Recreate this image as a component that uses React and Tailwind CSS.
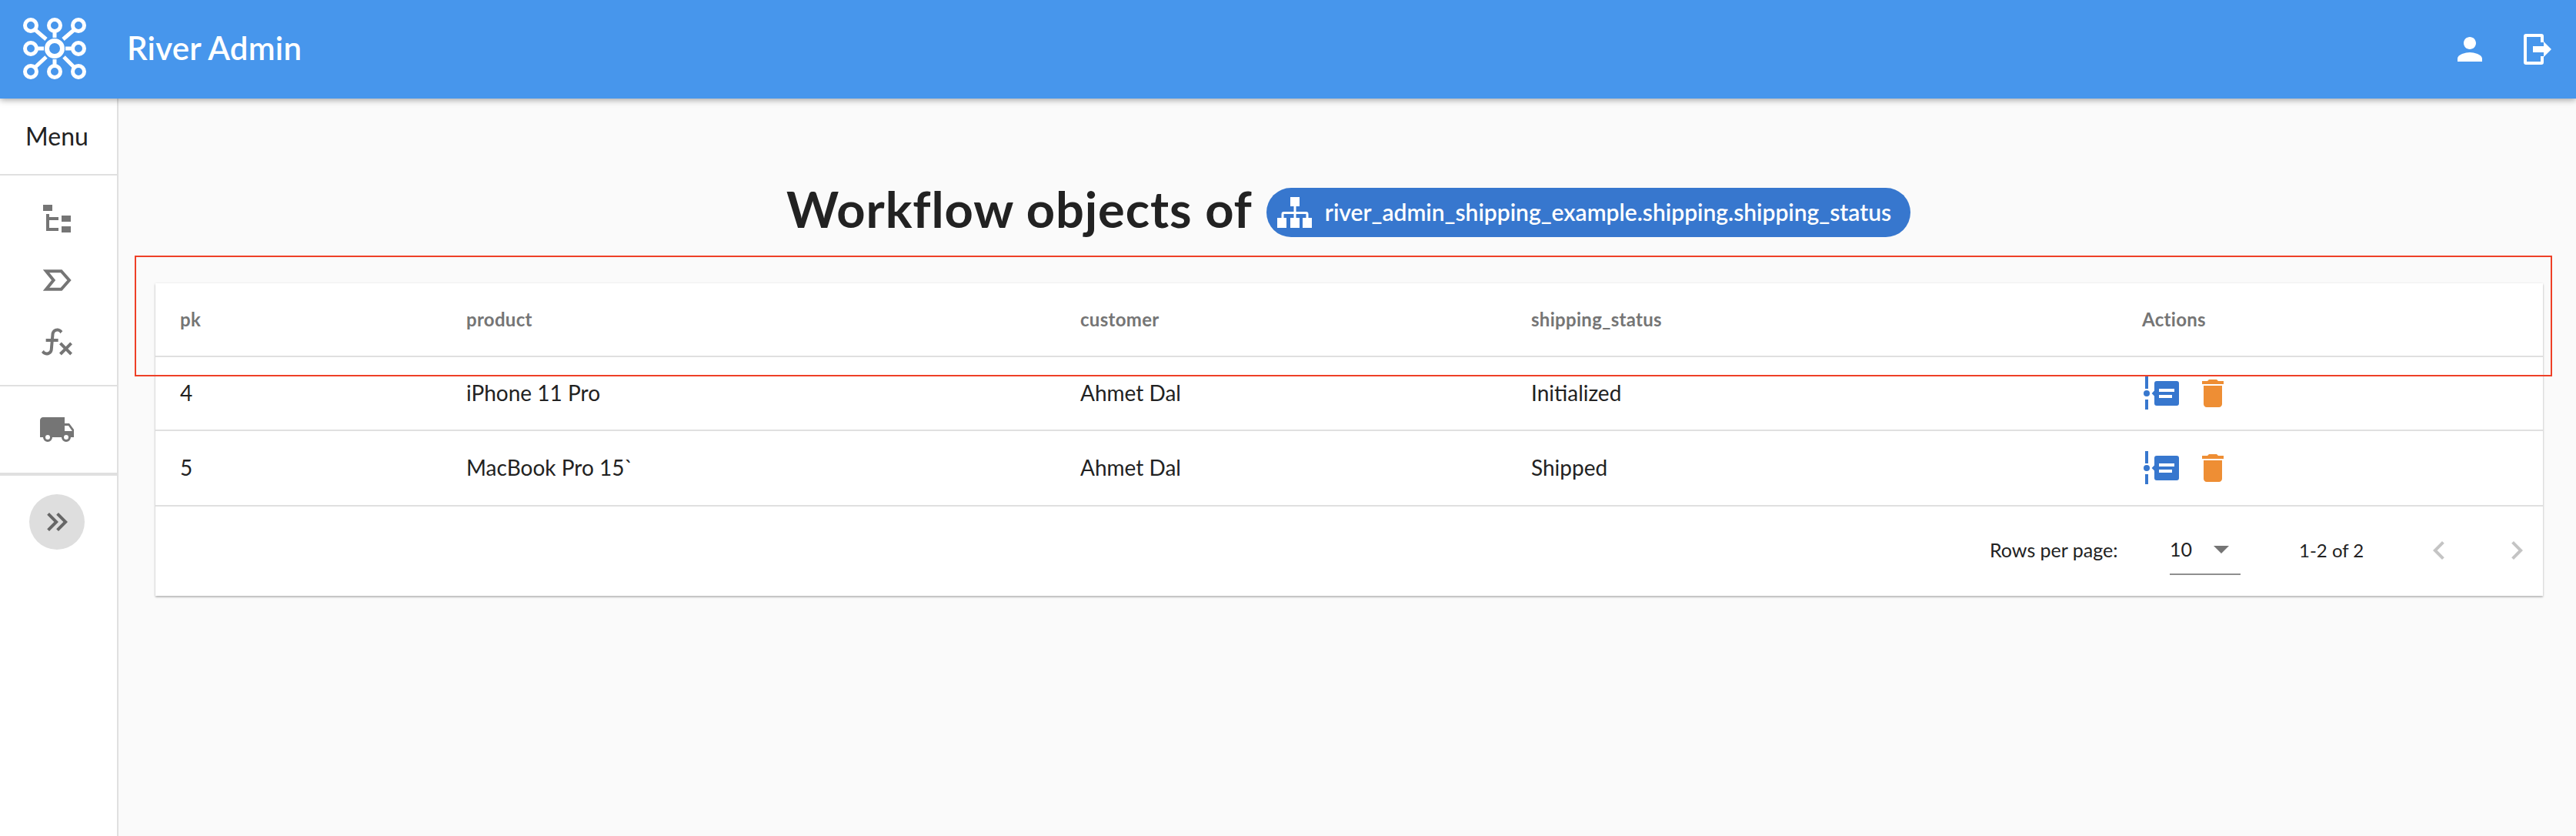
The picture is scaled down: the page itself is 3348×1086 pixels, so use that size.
import React from "react";

const font = { fontFamily: "Lato, 'Noto Sans', sans-serif" };

/* ── icons ── */

const Mdi = ({ d, className }) => (
  <svg viewBox="0 0 24 24" className={className} fill="currentColor">
    <path d={d} />
  </svg>
);

const TREE = "M3,3H9V7H3V3M15,10H21V14H15V10M15,17H21V21H15V17M13,13H7V18H13V20H7L5,20V9H7V11H13V13Z";
const FX =
  "M12.42,5.29C11.32,5.19 10.35,6 10.25,7.11L10,10H12.82V12H9.82L9.38,17.07C9.18,19.27 7.24,20.9 5.04,20.7C3.79,20.59 2.66,19.9 2,18.83L3.5,17.33C3.83,18.38 4.96,18.97 6,18.63C6.78,18.39 7.33,17.7 7.4,16.89L7.82,12H4.82V10H8L8.27,6.93C8.46,4.73 10.39,3.1 12.6,3.28C13.86,3.39 15,4.09 15.66,5.17L14.16,6.67C13.91,5.9 13.23,5.36 12.42,5.29M22,13.65L20.59,12.24L17.76,15.07L14.93,12.24L13.5,13.65L16.35,16.5L13.5,19.31L14.93,20.72L17.76,17.89L20.59,20.72L22,19.31L19.17,16.5L22,13.65Z";
const TRUCK =
  "M18,18.5A1.5,1.5 0 0,1 16.5,17A1.5,1.5 0 0,1 18,15.5A1.5,1.5 0 0,1 19.5,17A1.5,1.5 0 0,1 18,18.5M19.5,9.5L21.96,13H17V9.5M6,18.5A1.5,1.5 0 0,1 4.5,17A1.5,1.5 0 0,1 6,15.5A1.5,1.5 0 0,1 7.5,17A1.5,1.5 0 0,1 6,18.5M20,8H17V4H3C1.89,4 1,4.89 1,6V17H3A3,3 0 0,0 6,20A3,3 0 0,0 9,17H15A3,3 0 0,0 18,20A3,3 0 0,0 21,17H23V12L20,8Z";
const DOUBLE_CHEVRON =
  "M5.59,7.41L7,6L13,12L7,18L5.59,16.59L10.17,12L5.59,7.41M11.59,7.41L13,6L19,12L13,18L11.59,16.59L16.17,12L11.59,7.41Z";
const TRASH = "M6 19c0 1.1.9 2 2 2h8c1.1 0 2-.9 2-2V7H6v12zM19 4h-3.5l-1-1h-5l-1 1H5v2h14V4z";
const PERSON = "M12 12c2.21 0 4-1.79 4-4s-1.79-4-4-4-4 1.79-4 4 1.79 4 4 4zm0 2c-2.67 0-8 1.34-8 4v2h16v-2c0-2.66-5.33-4-8-4z";

const SequenceIcon = ({ className }) => (
  <svg viewBox="0 0 24 24" className={className} fill="none" stroke="currentColor" strokeWidth="2">
    <path d="M5 6.100H14.800L20 12L14.800 17.900H5L9.800 12Z" />
  </svg>
);

const LogoutIcon = ({ className }) => (
  <svg viewBox="0 0 36 40" className={className} fill="currentColor">
    <path d="M3 0h20a3 3 0 0 1 3 3v8h-4V4H4v32h18v-7h4v8a3 3 0 0 1-3 3H3a3 3 0 0 1-3-3V3a3 3 0 0 1 3-3z" />
    <path d="M12 16h14v-6l10 10-10 10v-6H12z" />
  </svg>
);

const TimelineIcon = ({ className }) => (
  <svg viewBox="0 0 24 24" className={className} fill="currentColor">
    <path d="M1 1h2v8H1zM1 16h2v6.500H1z" />
    <circle cx="2" cy="12" r="2" />
    <path d="M5.300 12L7 10.300V13.700Z" />
    <path
      fillRule="evenodd"
      d="M8.500 4H21.500a1.500 1.500 0 0 1 1.500 1.500V18.500a1.500 1.500 0 0 1-1.500 1.500H8.500a1.500 1.500 0 0 1-1.500-1.500V5.500A1.500 1.500 0 0 1 8.500 4ZM10 9V11H20V9ZM10 13V15H18.500V13Z"
    />
  </svg>
);

const SitemapIcon = ({ className }) => (
  <svg viewBox="0 0 45 40" className={className} fill="currentColor">
    <path d="M17 0h12v12H17zM0 27h12v13H0zM17 27h12v13H17zM33 27h12v13H33z" />
    <path d="M21.500 12h3v7h13a3 3 0 0 1 3 3v5h-3v-5h-13v5h-3v-5h-13v5h-3v-5a3 3 0 0 1 3-3h13z" />
  </svg>
);

const RiverLogo = ({ className }) => {
  const nodes = [
    [40, 33],
    [71, 33],
    [102, 33],
    [40, 63],
    [102, 63],
    [40, 93],
    [71, 93],
    [102, 93],
  ];
  return (
    <svg viewBox="0 0 142 128" className={className} fill="none" stroke="white" strokeWidth="5">
      {nodes.map(([x, y]) => (
        <circle key={`${x}-${y}`} cx={x} cy={y} r="7.500" />
      ))}
      <circle cx="71" cy="63" r="10" strokeWidth="6" />
      <path d="M71 41V49M71 77V85M48 63H57M85 63H95M46 39L60 51M96 39L82 51M46 87L60 74M96 87L83 74" strokeWidth="5" />
    </svg>
  );
};

/* ── page parts ── */

const Header = () => (
  <header className="relative z-10 flex h-[128px] shrink-0 items-center justify-between bg-[#4796ec] pr-[32px] text-white shadow-[0_2px_8px_rgba(0,0,0,0.35)]">
    <div className="flex items-center">
      <RiverLogo className="h-[128px] w-[142px]" />
      <span className="mb-[4px] ml-[23px] text-[42px] font-semibold tracking-[0.2px]">River Admin</span>
    </div>
    <div className="flex items-center gap-[46px]">
      <Mdi d={PERSON} className="h-[48px] w-[48px]" />
      <LogoutIcon className="h-[40px] w-[36px]" />
    </div>
  </header>
);

const Sidebar = () => (
  <aside className="flex w-[154px] shrink-0 flex-col border-r-2 border-[#e0e0e0] bg-white text-[#757575]">
    <div className="flex h-[100px] items-center justify-center border-b-2 border-[#e0e0e0] pr-[4px] text-[32px] text-[#222]">
      Menu
    </div>
    <div className="flex h-[274px] flex-col items-center border-b-2 border-[#e0e0e0] pr-[4px] pt-[16px]">
      <div className="flex h-[80px] items-center"><Mdi d={TREE} className="h-[48px] w-[48px]" /></div>
      <div className="flex h-[80px] items-center"><SequenceIcon className="h-[48px] w-[48px]" /></div>
      <div className="flex h-[80px] items-center"><Mdi d={FX} className="h-[48px] w-[48px]" /></div>
    </div>
    <div className="flex h-[116px] items-center justify-center border-b-4 border-[#e0e0e0] pr-[4px]">
      <Mdi d={TRUCK} className="h-[48px] w-[48px]" />
    </div>
    <div className="flex justify-center pr-[4px] pt-[24px]">
      <div className="flex h-[72px] w-[72px] items-center justify-center rounded-full bg-[#dedede] text-[#666]">
        <Mdi d={DOUBLE_CHEVRON} className="h-[48px] w-[48px]" />
      </div>
    </div>
  </aside>
);

const Row = ({ h, pk, product, customer, status }) => (
  <div className={`grid grid-cols-[404px_798px_586px_794px_1fr] items-center border-b-2 border-[#e0e0e0] text-[28px] text-[#222] ${h}`}>
    <span className="mb-[3px] pl-[32px]">{pk}</span>
    <span className="mb-[3px]">{product}</span>
    <span className="mb-[3px]">{customer}</span>
    <span className="mb-[3px]">{status}</span>
    <div className="flex items-center gap-[18px] pl-[2px]">
      <TimelineIcon className="h-[48px] w-[48px] text-[#3777ce]" />
      <Mdi d={TRASH} className="h-[48px] w-[48px] text-[#ee8e34]" />
    </div>
  </div>
);

const Pagination = () => (
  <div className="flex h-[116px] items-center justify-end pb-[2px] pr-[10px] text-[25px] text-[#222]">
    <span className="w-[234px]">Rows per page:</span>
    <div className="flex h-[64px] w-[92px] items-center justify-between border-b-2 border-[#8f8f8f] pr-[15px]">
      <span>10</span>
      <svg viewBox="0 0 20 10" className="h-[10px] w-[20px] text-[#757575]" fill="currentColor">
        <path d="M0 0H20L10 10Z" />
      </svg>
    </div>
    <span className="ml-[76px] w-[158px] text-[24px]">1-2 of 2</span>
    <div className="flex gap-[53px] text-[#c4c4c4]">
      <Mdi d="M15.41 7.41L14 6l-6 6 6 6 1.41-1.41L10.83 12z" className="h-[48px] w-[48px]" />
      <Mdi d="M10 6L8.59 7.41 13.17 12l-4.58 4.59L10 18l6-6z" className="h-[48px] w-[48px]" />
    </div>
  </div>
);

export default function App() {
  return (
    <div className="relative flex h-screen flex-col overflow-hidden bg-[#fafafa]" style={font}>
      <Header />
      <div className="flex flex-1">
        <Sidebar />
        <main className="min-w-0 flex-1 pl-[48px] pr-[43px] pt-[116px]">
          <div className="mb-[60px] flex h-[64px] items-center pl-[820px]">
            <h1 className="mb-[10px] text-[65px] font-bold leading-none tracking-[0.9px] text-[#222]">Workflow objects of</h1>
            <div className="ml-[18px] flex h-[64px] items-center rounded-full bg-[#3777ce] pl-[14px] pr-[25px] text-[30px] font-semibold text-white">
              <SitemapIcon className="h-[40px] w-[45px]" />
              <span className="mb-[2px] ml-[17px]">river_admin_shipping_example.shipping.shipping_status</span>
            </div>
          </div>

          <section className="bg-white shadow-[0_1px_3px_rgba(0,0,0,0.2),0_2px_2px_rgba(0,0,0,0.14)]">
            <div className="grid h-[96px] grid-cols-[404px_798px_586px_794px_1fr] items-center border-b-2 border-[#e0e0e0] text-[24px] font-bold tracking-[0.3px] text-[#757575]">
              <span className="pl-[32px]">pk</span>
              <span>product</span>
              <span>customer</span>
              <span>shipping_status</span>
              <span>Actions</span>
            </div>
            <Row h="h-[96px]" pk="4" product="iPhone 11 Pro" customer="Ahmet Dal" status="Initialized" />
            <Row h="h-[98px]" pk="5" product="MacBook Pro 15`" customer="Ahmet Dal" status="Shipped" />
            <Pagination />
          </section>
        </main>
      </div>

      {/* red annotation box from the screenshot */}
      <div className="pointer-events-none absolute left-[175px] top-[332px] z-20 h-[157px] w-[3142px] border-2 border-[#ee4027]" />
    </div>
  );
}
